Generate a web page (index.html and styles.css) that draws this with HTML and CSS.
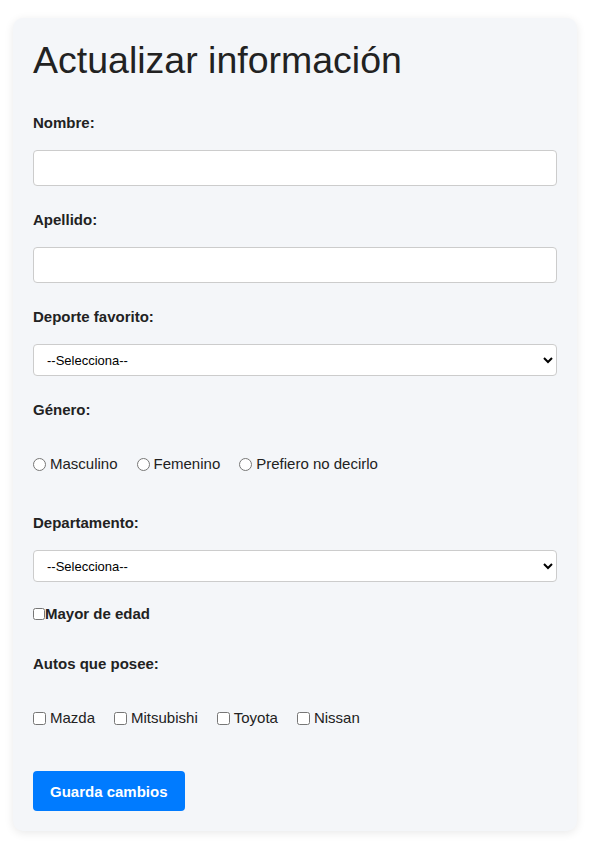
FILE: index.html
```html
<!DOCTYPE html>
<html lang="es">
<head>
<meta charset="utf-8">
<title>Actualizar información</title>
<link rel="stylesheet" href="styles.css">
</head>
<body>
<div class="card">
  <h1 class="title">Actualizar información</h1>
  <form class="form">
    <label class="field-label" for="nombre">Nombre:</label>
    <input class="text-input" type="text" id="nombre">

    <label class="field-label" for="apellido">Apellido:</label>
    <input class="text-input" type="text" id="apellido">

    <label class="field-label" for="deporte">Deporte favorito:</label>
    <select class="select-input" id="deporte">
      <option>--Selecciona--</option>
    </select>

    <label class="field-label label-group">Género:</label>
    <div class="option-row row-radios">
      <label class="option"><input class="radio" type="radio" name="genero">Masculino</label>
      <label class="option"><input class="radio" type="radio" name="genero">Femenino</label>
      <label class="option"><input class="radio" type="radio" name="genero">Prefiero no decirlo</label>
    </div>

    <label class="field-label" for="depto">Departamento:</label>
    <select class="select-input select-last" id="depto">
      <option>--Selecciona--</option>
    </select>

    <label class="field-label mayor"><input class="check-inline" type="checkbox">Mayor de edad</label>

    <label class="field-label label-group">Autos que posee:</label>
    <div class="option-row row-checks">
      <label class="option"><input class="check" type="checkbox">Mazda</label>
      <label class="option"><input class="check" type="checkbox">Mitsubishi</label>
      <label class="option"><input class="check" type="checkbox">Toyota</label>
      <label class="option"><input class="check" type="checkbox">Nissan</label>
    </div>

    <button class="btn" type="button">Guarda cambios</button>
  </form>
</div>
</body>
</html>
```

FILE: styles.css
```css
* { box-sizing: border-box; }

html, body {
  margin: 0;
  padding: 0;
  background: #ffffff;
}

body {
  font-family: "Liberation Sans", Arial, sans-serif;
  color: #222222;
}

.card {
  width: 564px;
  margin: 18px 0 24px 13px;
  padding: 20px;
  background: #f4f6f9;
  border-radius: 10px;
  box-shadow: 0 2px 10px rgba(0, 0, 0, 0.09);
}

.title {
  margin: 0 0 32px;
  font-size: 37.5px;
  font-weight: normal;
  line-height: 44px;
  color: #222222;
}

.form {
  display: flex;
  flex-direction: column;
  align-items: flex-start;
}

.field-label {
  display: block;
  font-size: 15px;
  font-weight: bold;
  line-height: 18px;
  margin-bottom: 18px;
}

.label-group { margin-bottom: 36px; }

.text-input {
  display: block;
  width: 100%;
  height: 36px;
  margin: 0 0 25px;
  padding: 6px 10px;
  border: 1px solid #cccccc;
  border-radius: 4px;
  background: #ffffff;
  font-family: inherit;
  font-size: 15px;
}

.select-input {
  display: block;
  width: 100%;
  height: 32px;
  margin: 0 0 25px;
  padding: 0 6px 0 9px;
  border: 1px solid #cccccc;
  border-radius: 4px;
  background: #ffffff;
  font-family: "Liberation Sans", Arial, sans-serif;
  font-size: 13px;
  color: #000000;
}

.select-last { margin-bottom: 23px; }

.option-row {
  display: flex;
  align-items: center;
  gap: 19px;
  height: 18px;
  font-size: 15px;
  line-height: 18px;
  color: #222222;
}

.row-radios { margin-bottom: 41px; }
.row-checks { margin-bottom: 44px; }

.option {
  display: flex;
  align-items: center;
}

.radio, .check {
  width: 13px;
  height: 13px;
  margin: 0 4px 0 0;
}

.mayor {
  display: flex;
  align-items: center;
  margin-bottom: 32px;
}

.check-inline {
  width: 12px;
  height: 12px;
  margin: 0;
}

.btn {
  height: 40px;
  padding: 0 17px;
  border: none;
  border-radius: 4px;
  background: #007bff;
  color: #ffffff;
  font-family: "Liberation Sans", Arial, sans-serif;
  font-size: 15px;
  font-weight: bold;
  cursor: pointer;
}
```
